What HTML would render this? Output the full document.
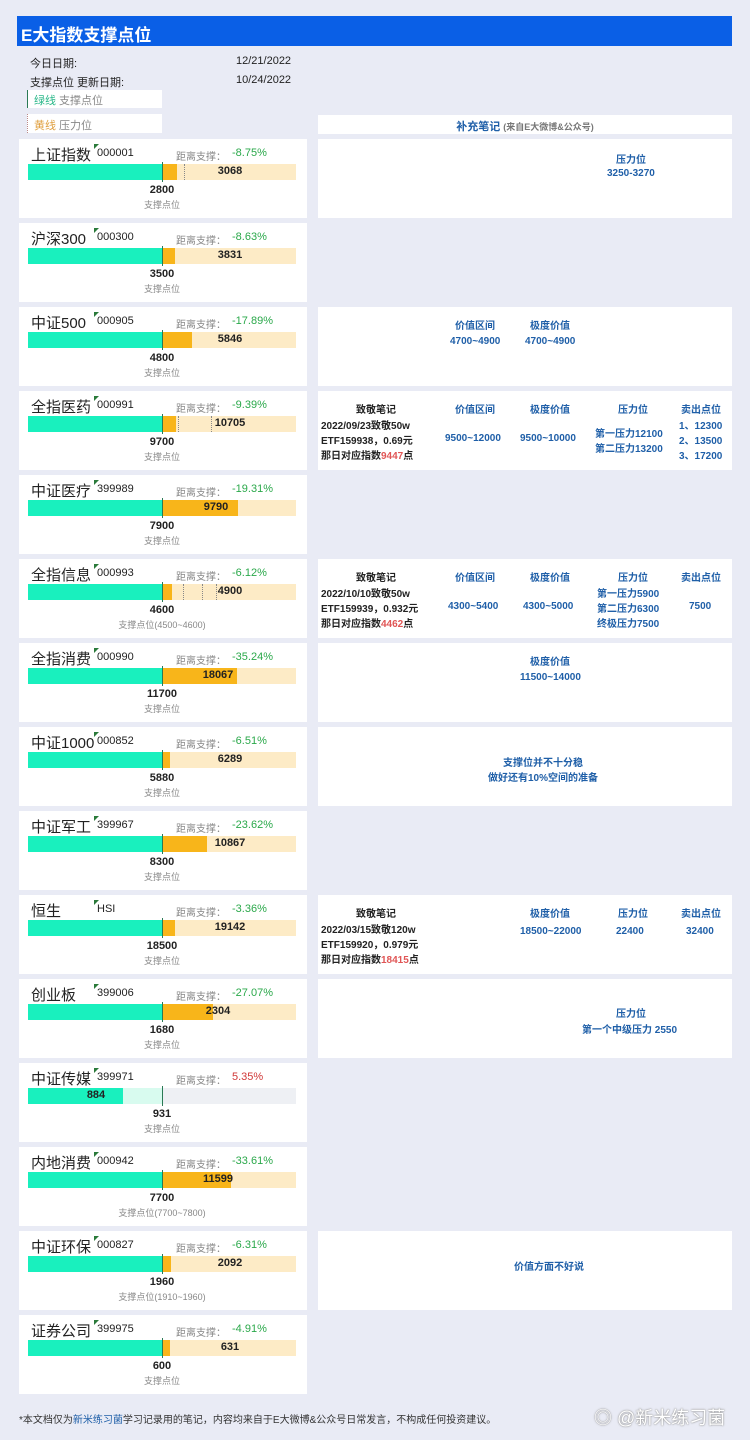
<!DOCTYPE html><html><head><meta charset="utf-8"><style>
*{margin:0;padding:0;box-sizing:border-box}
body{width:750px;height:1440px;background:#e9ebf5;position:relative;overflow:hidden;font-family:"Liberation Sans","Noto Sans CJK SC",sans-serif;color:#222}
.a{position:absolute}
.hd{left:17px;top:16px;width:715px;height:30px;background:#0a5fe6;color:#fff;font-size:17px;font-weight:bold;padding:5px 0 0 4px}
.c{position:absolute;left:19px;width:288px;height:79px;background:#fff}
.t{position:absolute;left:12px;top:5px;font-size:15px}
.cd{position:absolute;left:78px;top:8px;font-size:11px}
.cd:before{content:"";position:absolute;left:-3px;top:-3px;border-left:5px solid #2a7a3a;border-bottom:5px solid transparent}
.ds{position:absolute;left:157px;top:9px;font-size:10px;color:#888}
.p{position:absolute;left:213px;top:8px;font-size:11px;color:#2aa84a}
.bar{position:absolute;left:9px;top:25px;width:268px;height:16px;background:#fdebc6}
.g{position:absolute;left:0;top:0;height:16px;width:134px;background:#19f0be}
.o{position:absolute;left:134px;top:0;height:16px;background:#f8b51a}
.ln{position:absolute;left:134px;top:-2px;width:1px;height:20px;background:#2a7a55}
.v{position:absolute;top:1px;font-size:11px;font-weight:bold;width:60px;text-align:center}
.n{position:absolute;left:113px;top:45px;width:60px;text-align:center;font-size:11px;font-weight:bold}
.s{position:absolute;left:43px;top:59px;width:200px;text-align:center;font-size:9px;color:#888}
.r{position:absolute;left:318px;width:414px;height:79px;background:#fff;color:#1f5fa8;font-size:10px;font-weight:bold}
.r span{position:absolute;text-align:center;white-space:nowrap}
.k{color:#222}
.red{color:#e05555}
</style></head><body>
<div class="a hd">E大指数支撑点位</div>
<div class="a" style="left:30px;top:55px;font-size:11px">今日日期:</div>
<div class="a" style="left:236px;top:55px;font-size:11px">12/21/2022</div>
<div class="a" style="left:30px;top:74px;font-size:11px">支撑点位 更新日期:</div>
<div class="a" style="left:236px;top:74px;font-size:11px">10/24/2022</div>
<div class="a" style="left:27px;top:90px;width:135px;height:18px;background:#fff;border-left:1px solid #2a7a55;font-size:11px;padding:2px 0 0 6px;color:#888"><span style="color:#2bb88a">绿线</span> 支撑点位</div>
<div class="a" style="left:27px;top:114px;width:135px;height:19px;background:#fff;border-left:1px dotted #b88;font-size:11px;padding:3px 0 0 6px;color:#888"><span style="color:#e0a040">黄线</span> 压力位</div>
<div class="a" style="left:318px;top:115px;width:414px;height:19px;background:#fff;font-size:11px;color:#1f5fa8;font-weight:bold;text-align:center;padding-top:3px">补充笔记 <span style="font-size:9px;color:#777">(来自E大微博&amp;公众号)</span></div>

<div class="c" style="top:139px"><div class="t">上证指数</div><div class="cd">000001</div><div class="ds">距离支撑：</div><div class="p">-8.75%</div><div class="bar"><div class="g"></div><div class="o" style="width:15px"></div><div class="ln"></div><div class="a" style="left:156px;top:0;height:16px;border-left:1px dotted #888"></div><div class="v" style="left:172px">3068</div></div><div class="n">2800</div><div class="s">支撑点位</div></div>
<div class="c" style="top:223px"><div class="t">沪深300</div><div class="cd">000300</div><div class="ds">距离支撑：</div><div class="p">-8.63%</div><div class="bar"><div class="g"></div><div class="o" style="width:13px"></div><div class="ln"></div><div class="v" style="left:172px">3831</div></div><div class="n">3500</div><div class="s">支撑点位</div></div>
<div class="c" style="top:307px"><div class="t">中证500</div><div class="cd">000905</div><div class="ds">距离支撑：</div><div class="p">-17.89%</div><div class="bar"><div class="g"></div><div class="o" style="width:30px"></div><div class="ln"></div><div class="v" style="left:172px">5846</div></div><div class="n">4800</div><div class="s">支撑点位</div></div>
<div class="c" style="top:391px"><div class="t">全指医药</div><div class="cd">000991</div><div class="ds">距离支撑：</div><div class="p">-9.39%</div><div class="bar"><div class="g"></div><div class="o" style="width:14px"></div><div class="ln"></div><div class="a" style="left:150px;top:0;height:16px;border-left:1px dotted #888"></div><div class="a" style="left:183px;top:0;height:16px;border-left:1px dotted #888"></div><div class="v" style="left:172px">10705</div></div><div class="n">9700</div><div class="s">支撑点位</div></div>
<div class="c" style="top:475px"><div class="t">中证医疗</div><div class="cd">399989</div><div class="ds">距离支撑：</div><div class="p">-19.31%</div><div class="bar"><div class="g"></div><div class="o" style="width:76px"></div><div class="ln"></div><div class="v" style="left:158px">9790</div></div><div class="n">7900</div><div class="s">支撑点位</div></div>
<div class="c" style="top:559px"><div class="t">全指信息</div><div class="cd">000993</div><div class="ds">距离支撑：</div><div class="p">-6.12%</div><div class="bar"><div class="g"></div><div class="o" style="width:10px"></div><div class="ln"></div><div class="a" style="left:155px;top:0;height:16px;border-left:1px dotted #888"></div><div class="a" style="left:174px;top:0;height:16px;border-left:1px dotted #888"></div><div class="a" style="left:188px;top:0;height:16px;border-left:1px dotted #888"></div><div class="v" style="left:172px">4900</div></div><div class="n">4600</div><div class="s">支撑点位(4500~4600)</div></div>
<div class="c" style="top:643px"><div class="t">全指消费</div><div class="cd">000990</div><div class="ds">距离支撑：</div><div class="p">-35.24%</div><div class="bar"><div class="g"></div><div class="o" style="width:75px"></div><div class="ln"></div><div class="v" style="left:160px">18067</div></div><div class="n">11700</div><div class="s">支撑点位</div></div>
<div class="c" style="top:727px"><div class="t">中证1000</div><div class="cd">000852</div><div class="ds">距离支撑：</div><div class="p">-6.51%</div><div class="bar"><div class="g"></div><div class="o" style="width:8px"></div><div class="ln"></div><div class="v" style="left:172px">6289</div></div><div class="n">5880</div><div class="s">支撑点位</div></div>
<div class="c" style="top:811px"><div class="t">中证军工</div><div class="cd">399967</div><div class="ds">距离支撑：</div><div class="p">-23.62%</div><div class="bar"><div class="g"></div><div class="o" style="width:45px"></div><div class="ln"></div><div class="v" style="left:172px">10867</div></div><div class="n">8300</div><div class="s">支撑点位</div></div>
<div class="c" style="top:895px"><div class="t">恒生</div><div class="cd" style="left:78px">HSI</div><div class="ds">距离支撑：</div><div class="p">-3.36%</div><div class="bar"><div class="g"></div><div class="o" style="width:13px"></div><div class="ln"></div><div class="v" style="left:172px">19142</div></div><div class="n">18500</div><div class="s">支撑点位</div></div>
<div class="c" style="top:979px"><div class="t">创业板</div><div class="cd">399006</div><div class="ds">距离支撑：</div><div class="p">-27.07%</div><div class="bar"><div class="g"></div><div class="o" style="width:51px"></div><div class="ln"></div><div class="v" style="left:160px">2304</div></div><div class="n">1680</div><div class="s">支撑点位</div></div>
<div class="c" style="top:1063px"><div class="t">中证传媒</div><div class="cd">399971</div><div class="ds">距离支撑：</div><div class="p" style="color:#d03838">5.35%</div><div class="bar" style="background:#eef0f4"><div class="g" style="width:134px;background:#d8fbef"></div><div class="g" style="width:95px"></div><div class="ln"></div><div class="v" style="left:38px">884</div></div><div class="n">931</div><div class="s">支撑点位</div></div>
<div class="c" style="top:1147px"><div class="t">内地消费</div><div class="cd">000942</div><div class="ds">距离支撑：</div><div class="p">-33.61%</div><div class="bar"><div class="g"></div><div class="o" style="width:69px"></div><div class="ln"></div><div class="v" style="left:160px">11599</div></div><div class="n">7700</div><div class="s">支撑点位(7700~7800)</div></div>
<div class="c" style="top:1231px"><div class="t">中证环保</div><div class="cd">000827</div><div class="ds">距离支撑：</div><div class="p">-6.31%</div><div class="bar"><div class="g"></div><div class="o" style="width:9px"></div><div class="ln"></div><div class="v" style="left:172px">2092</div></div><div class="n">1960</div><div class="s">支撑点位(1910~1960)</div></div>
<div class="c" style="top:1315px"><div class="t">证券公司</div><div class="cd">399975</div><div class="ds">距离支撑：</div><div class="p">-4.91%</div><div class="bar"><div class="g"></div><div class="o" style="width:8px"></div><div class="ln"></div><div class="v" style="left:172px">631</div></div><div class="n">600</div><div class="s">支撑点位</div></div>

<div class="r" style="top:139px"><span style="left:298px;top:12px">压力位</span><span style="left:289px;top:29px">3250-3270</span></div>
<div class="r" style="top:307px"><span style="left:137px;top:10px">价值区间</span><span style="left:212px;top:10px">极度价值</span><span style="left:132px;top:29px">4700~4900</span><span style="left:207px;top:29px">4700~4900</span></div>
<div class="r" style="top:391px"><span class="k" style="left:38px;top:10px">致敬笔记</span><span class="k" style="left:3px;top:26px;text-align:left">2022/09/23致敬50w<br>ETF159938，0.69元<br>那日对应指数<b class="red">9447</b>点</span><span style="left:137px;top:10px">价值区间</span><span style="left:212px;top:10px">极度价值</span><span style="left:300px;top:10px">压力位</span><span style="left:363px;top:10px">卖出点位</span><span style="left:127px;top:42px">9500~12000</span><span style="left:202px;top:42px">9500~10000</span><span style="left:277px;top:34px">第一压力12100<br>第二压力13200</span><span style="left:361px;top:26px;text-align:left">1、12300<br>2、13500<br>3、17200</span></div>
<div class="r" style="top:559px"><span class="k" style="left:38px;top:10px">致敬笔记</span><span class="k" style="left:3px;top:26px;text-align:left">2022/10/10致敬50w<br>ETF159939，0.932元<br>那日对应指数<b class="red">4462</b>点</span><span style="left:137px;top:10px">价值区间</span><span style="left:212px;top:10px">极度价值</span><span style="left:300px;top:10px">压力位</span><span style="left:363px;top:10px">卖出点位</span><span style="left:130px;top:42px">4300~5400</span><span style="left:205px;top:42px">4300~5000</span><span style="left:279px;top:26px">第一压力5900<br>第二压力6300<br>终极压力7500</span><span style="left:371px;top:42px">7500</span></div>
<div class="r" style="top:643px"><span style="left:212px;top:10px">极度价值</span><span style="left:202px;top:29px">11500~14000</span></div>
<div class="r" style="top:727px"><span style="left:170px;top:27px">支撑位并不十分稳<br>做好还有10%空间的准备</span></div>
<div class="r" style="top:895px"><span class="k" style="left:38px;top:10px">致敬笔记</span><span class="k" style="left:3px;top:26px;text-align:left">2022/03/15致敬120w<br>ETF159920，0.979元<br>那日对应指数<b class="red">18415</b>点</span><span style="left:212px;top:10px">极度价值</span><span style="left:300px;top:10px">压力位</span><span style="left:363px;top:10px">卖出点位</span><span style="left:202px;top:31px">18500~22000</span><span style="left:298px;top:31px">22400</span><span style="left:368px;top:31px">32400</span></div>
<div class="r" style="top:979px"><span style="left:298px;top:26px">压力位</span><span style="left:264px;top:42px">第一个中级压力 2550</span></div>
<div class="r" style="top:1231px"><span style="left:196px;top:27px">价值方面不好说</span></div>

<div class="a" style="left:19px;top:1411px;font-size:10px;color:#333">*本文档仅为<span style="color:#1f5fa8">新米练习菌</span>学习记录用的笔记，内容均来自于E大微博&amp;公众号日常发言，不构成任何投资建议。</div>
<div class="a" style="left:594px;top:1404px;font-size:18px;color:#fff;text-shadow:0 0 1px #888,0 0 2px #999">◎ @新米练习菌</div>
</body></html>
